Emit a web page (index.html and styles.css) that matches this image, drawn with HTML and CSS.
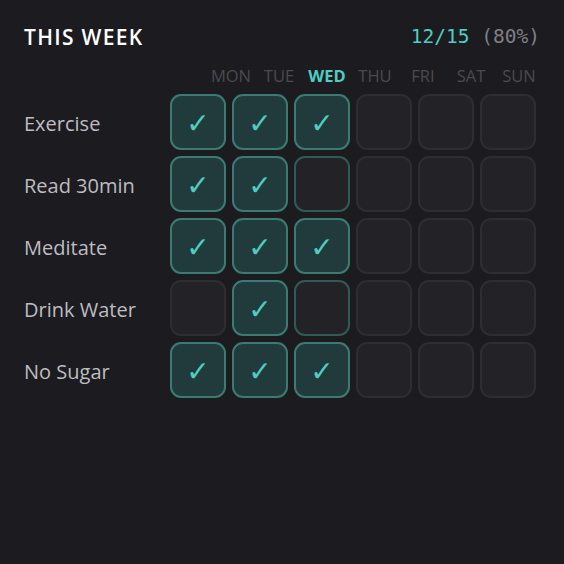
FILE: index.html
```html
<!DOCTYPE html>
<html>
<head>
<meta charset="utf-8">
<link rel="stylesheet" href="styles.css">
</head>
<body>
<div class="card">
  <div class="header">
    <div class="title">THIS WEEK</div>
    <div class="score"><span class="done">12/15</span> <span class="pct">(80%)</span></div>
  </div>
  <div class="days">
    <span class="day">MON</span><span class="day">TUE</span><span class="day today">WED</span><span class="day">THU</span><span class="day">FRI</span><span class="day">SAT</span><span class="day">SUN</span>
  </div>
  <div class="grid">
    <div class="row">
      <div class="label">Exercise</div>
      <div class="cell on">✓</div><div class="cell on">✓</div><div class="cell on">✓</div><div class="cell"></div><div class="cell"></div><div class="cell"></div><div class="cell"></div>
    </div>
    <div class="row">
      <div class="label">Read 30min</div>
      <div class="cell on">✓</div><div class="cell on">✓</div><div class="cell today"></div><div class="cell"></div><div class="cell"></div><div class="cell"></div><div class="cell"></div>
    </div>
    <div class="row">
      <div class="label">Meditate</div>
      <div class="cell on">✓</div><div class="cell on">✓</div><div class="cell on">✓</div><div class="cell"></div><div class="cell"></div><div class="cell"></div><div class="cell"></div>
    </div>
    <div class="row">
      <div class="label">Drink Water</div>
      <div class="cell"></div><div class="cell on">✓</div><div class="cell today"></div><div class="cell"></div><div class="cell"></div><div class="cell"></div><div class="cell"></div>
    </div>
    <div class="row">
      <div class="label">No Sugar</div>
      <div class="cell on">✓</div><div class="cell on">✓</div><div class="cell on">✓</div><div class="cell"></div><div class="cell"></div><div class="cell"></div><div class="cell"></div>
    </div>
  </div>
</div>
</body>
</html>
```

FILE: styles.css
```css
html, body {
  margin: 0;
  padding: 0;
  background: #1c1b20;
  height: 100%;
}
body {
  font-family: "Open Sans", "Noto Sans", sans-serif;
}
.card {
  padding: 20px 24px 24px 24px;
}
.header {
  display: flex;
  justify-content: space-between;
  align-items: center;
  height: 34px;
}
.title {
  color: #ffffff;
  font-size: 21px;
  font-weight: 600;
  letter-spacing: 1.3px;
}
.score {
  font-family: "DejaVu Sans Mono", "Liberation Mono", monospace;
  font-size: 19.5px;
  margin-top: -2px;
}
.score .done { color: #4ecdc0; }
.score .pct { color: #807f84; }
.days {
  display: flex;
  justify-content: flex-end;
  gap: 6px;
  margin-top: 7px;
  height: 28px;
  align-items: center;
}
.day {
  width: 42px;
  text-align: center;
  font-size: 16.5px;
  color: #4b4a50;
}
.day.today {
  color: #4ecdc0;
  font-weight: 700;
}
.grid {
  margin-top: 5px;
  display: flex;
  flex-direction: column;
  gap: 6px;
  overflow: hidden;
}
.row {
  display: flex;
  align-items: center;
  gap: 6px;
}
.label {
  width: 140px;
  flex: none;
  color: #bdbdc0;
  font-size: 20px;
  padding-top: 2px;
}
.cell {
  flex: none;
  width: 56px;
  height: 56px;
  box-sizing: border-box;
  border-radius: 11px;
  border: 2px solid #2e2d33;
  background: #232227;
  display: flex;
  align-items: center;
  justify-content: center;
  color: #4ecdc0;
  font-family: "DejaVu Sans", sans-serif;
  font-size: 28px;
  padding-top: 3px;
}
.cell.today {
  border-color: #2f5b57;
}
.cell.on {
  background: #213b3c;
  border-color: #3a7b73;
}
```
